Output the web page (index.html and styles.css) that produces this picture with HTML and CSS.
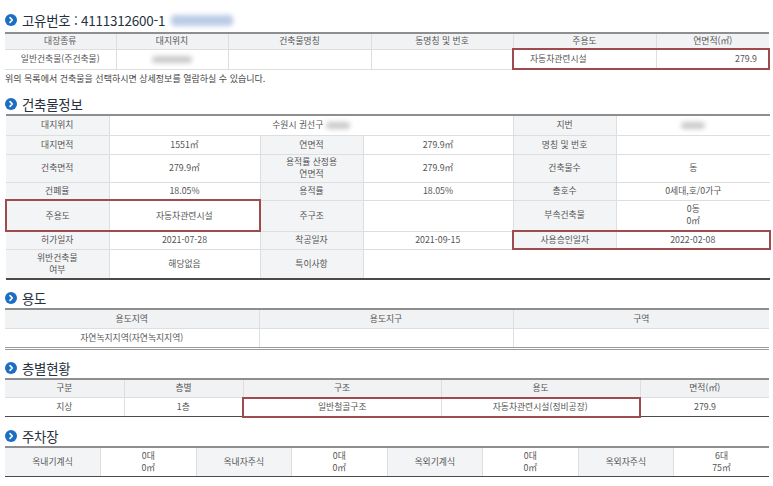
FILE: index.html
```html
<!DOCTYPE html>
<html lang="ko">
<head>
<meta charset="utf-8">
<link rel="stylesheet" href="styles.css">
</head>
<body>
<div class="page">
  <h2 class="heading title">
    <span class="ico"><svg viewBox="0 0 12 12" width="12" height="12"><circle cx="6" cy="6" r="6" fill="#1b6ec2"/><path d="M5 3.6 L7.3 6 L5 8.4" fill="none" stroke="#fff" stroke-width="1.6" stroke-linecap="round" stroke-linejoin="round"/></svg></span>
    <span>고유번호 : 4111312600-1</span><span class="blur blue"></span>
  </h2>
  <table class="tbl t1">
    <colgroup><col style="width:111px"><col style="width:112px"><col style="width:143px"><col style="width:142px"><col style="width:143px"><col style="width:113px"></colgroup>
    <tr class="hd"><th>대장종류</th><th>대지위치</th><th>건축물명칭</th><th>동명칭 및 번호</th><th>주용도</th><th>연면적(㎡)</th></tr>
    <tr class="r20"><td>일반건축물(주건축물)</td><td><span class="blur gray w40"></span></td><td></td><td></td><td class="left hl hl-l">자동차관련시설</td><td class="right hl hl-r">279.9</td></tr>
  </table>
  <p class="note">위의 목록에서 건축물을 선택하시면 상세정보를 열람하실 수 있습니다.</p>

  <h2 class="heading after-note">
    <span class="ico"><svg viewBox="0 0 12 12" width="12" height="12"><circle cx="6" cy="6" r="6" fill="#1b6ec2"/><path d="M5 3.6 L7.3 6 L5 8.4" fill="none" stroke="#fff" stroke-width="1.6" stroke-linecap="round" stroke-linejoin="round"/></svg></span>
    <span>건축물정보</span>
  </h2>
  <table class="tbl t2">
    <colgroup><col style="width:103px"><col style="width:151px"><col style="width:103px"><col style="width:150px"><col style="width:103px"><col style="width:154px"></colgroup>
    <tr class="r20"><th>대지위치</th><td colspan="3">수원시 권선구 <span class="blur gray w22"></span></td><th>지번</th><td><span class="blur gray w22"></span></td></tr>
    <tr class="r19"><th>대지면적</th><td>1551㎡</td><th>연면적</th><td>279.9㎡</td><th>명칭 및 번호</th><td></td></tr>
    <tr class="r28"><th>건축면적</th><td>279.9㎡</td><th>용적률 산정용<br>연면적</th><td>279.9㎡</td><th>건축물수</th><td>동</td></tr>
    <tr class="r18"><th>건폐율</th><td>18.05%</td><th>용적률</th><td>18.05%</td><th>총호수</th><td>0세대,호/0가구</td></tr>
    <tr class="r31"><th class="hl hl-l">주용도</th><td class="hl hl-r">자동차관련시설</td><th>주구조</th><td></td><th>부속건축물</th><td>0동<br>0㎡</td></tr>
    <tr class="r18"><th>허가일자</th><td>2021-07-28</td><th>착공일자</th><td>2021-09-15</td><th class="hl hl-l">사용승인일자</th><td class="hl hl-r">2022-02-08</td></tr>
    <tr class="r30"><th>위반건축물<br>여부</th><td>해당없음</td><th>특이사항</th><td colspan="3"></td></tr>
  </table>

  <h2 class="heading">
    <span class="ico"><svg viewBox="0 0 12 12" width="12" height="12"><circle cx="6" cy="6" r="6" fill="#1b6ec2"/><path d="M5 3.6 L7.3 6 L5 8.4" fill="none" stroke="#fff" stroke-width="1.6" stroke-linecap="round" stroke-linejoin="round"/></svg></span>
    <span>용도</span>
  </h2>
  <table class="tbl t3">
    <colgroup><col style="width:254px"><col style="width:254px"><col style="width:256px"></colgroup>
    <tr class="hd r19"><th>용도지역</th><th>용도지구</th><th>구역</th></tr>
    <tr class="r20"><td>자연녹지지역(자연녹지지역)</td><td></td><td></td></tr>
  </table>

  <h2 class="heading">
    <span class="ico"><svg viewBox="0 0 12 12" width="12" height="12"><circle cx="6" cy="6" r="6" fill="#1b6ec2"/><path d="M5 3.6 L7.3 6 L5 8.4" fill="none" stroke="#fff" stroke-width="1.6" stroke-linecap="round" stroke-linejoin="round"/></svg></span>
    <span>층별현황</span>
  </h2>
  <table class="tbl t4">
    <colgroup><col style="width:119px"><col style="width:119px"><col style="width:198px"><col style="width:199px"><col style="width:129px"></colgroup>
    <tr class="hd r19"><th>구분</th><th>층별</th><th>구조</th><th>용도</th><th>면적(㎡)</th></tr>
    <tr class="r19"><td>지상</td><td>1층</td><td class="hl hl-l">일반철골구조</td><td class="hl hl-r">자동차관련시설(정비공장)</td><td>279.9</td></tr>
  </table>

  <h2 class="heading">
    <span class="ico"><svg viewBox="0 0 12 12" width="12" height="12"><circle cx="6" cy="6" r="6" fill="#1b6ec2"/><path d="M5 3.6 L7.3 6 L5 8.4" fill="none" stroke="#fff" stroke-width="1.6" stroke-linecap="round" stroke-linejoin="round"/></svg></span>
    <span>주차장</span>
  </h2>
  <table class="tbl t5">
    <colgroup><col><col><col><col><col><col><col><col></colgroup>
    <tr class="r30"><th>옥내기계식</th><td>0대<br>0㎡</td><th>옥내자주식</th><td>0대<br>0㎡</td><th>옥외기계식</th><td>0대<br>0㎡</td><th>옥외자주식</th><td>6대<br>75㎡</td></tr>
  </table>
</div>
</body>
</html>
```

FILE: styles.css
```css
* { box-sizing: border-box; }
html, body { margin: 0; padding: 0; background: #fff; }
body {
  font-family: "Noto Sans CJK KR", "Noto Sans", sans-serif;
  color: #555;
  font-size: 8.8px;
}
.page {
  width: 773px;
  padding: 0 4px 0 5px;
}
.heading {
  display: flex;
  align-items: center;
  gap: 5px;
  height: 20px;
  margin: 8px 0 0 0;
  font-size: 13.4px;
  font-weight: 400;
  color: #26303e;
  line-height: 20px;
  letter-spacing: -0.2px;
}
.heading.title { margin-top: 9px; height: 22px; margin-bottom: 1px; }
.heading.after-note { margin-top: 6px; }
.ico { display: flex; width: 12px; height: 12px; }
.blur {
  display: inline-block;
  vertical-align: middle;
  filter: blur(2.5px);
  border-radius: 4px;
}
.blur.blue { width: 62px; height: 11px; background: #bccbe6; margin-left: 1px; }
.blur.gray { height: 7px; background: #c9c9c9; }
.w40 { width: 40px; }
.w22 { width: 24px; }

.tbl {
  width: 764px;
  border-collapse: collapse;
  table-layout: fixed;
  border-top: 2px solid #8e8e8e;
}
.tbl th, .tbl td {
  border: 1px solid #dedede;
  font-weight: 400;
  text-align: center;
  vertical-align: middle;
  padding: 0;
  line-height: 12px;
  color: #555;
}
.tbl tr > :first-child { border-left: none; }
.tbl tr > :last-child { border-right: none; }
.tbl th { background: #f3f4f6; }
.tbl td { background: #fff; }
.hd th { background: #f1f2f4; }
.t1 .hd { height: 16px; }
.r18 { height: 18px; }
.r19 { height: 19px; }
.r20 { height: 20px; }
.r28 { height: 28px; }
.r30 { height: 30px; }
.r31 { height: 31px; }
.t1 td.left { text-align: left; padding-left: 16px; }
.t1 td.right { text-align: right; padding-right: 11px; }
.t1 tr:last-child td { border-bottom: 1px solid #dedede; }
.t2 { border-bottom: 2px solid #4a4a4a; }
.t2 tr:last-child > * { border-bottom: 2px solid #4a4a4a; }
.t3 tr:last-child > * { border-bottom: 3px double #9a9a9a; }
.t4 tr:last-child > * { border-bottom: 1.5px solid #4a4a4a; }
.t5 tr:last-child > * { border-bottom: 1.5px solid #4a4a4a; }
.t5 tr > * { border-top: 2px solid #8e8e8e; }

.hl { border-top: 2px solid #9e4a4e !important; border-bottom: 2px solid #9e4a4e !important; }
.hl-l { border-left: 2px solid #9e4a4e !important; }
.hl-r { border-right: 2px solid #9e4a4e !important; }

.note {
  margin: 0;
  height: 18px;
  line-height: 18px;
  font-size: 9px;
  color: #444;
}
```
